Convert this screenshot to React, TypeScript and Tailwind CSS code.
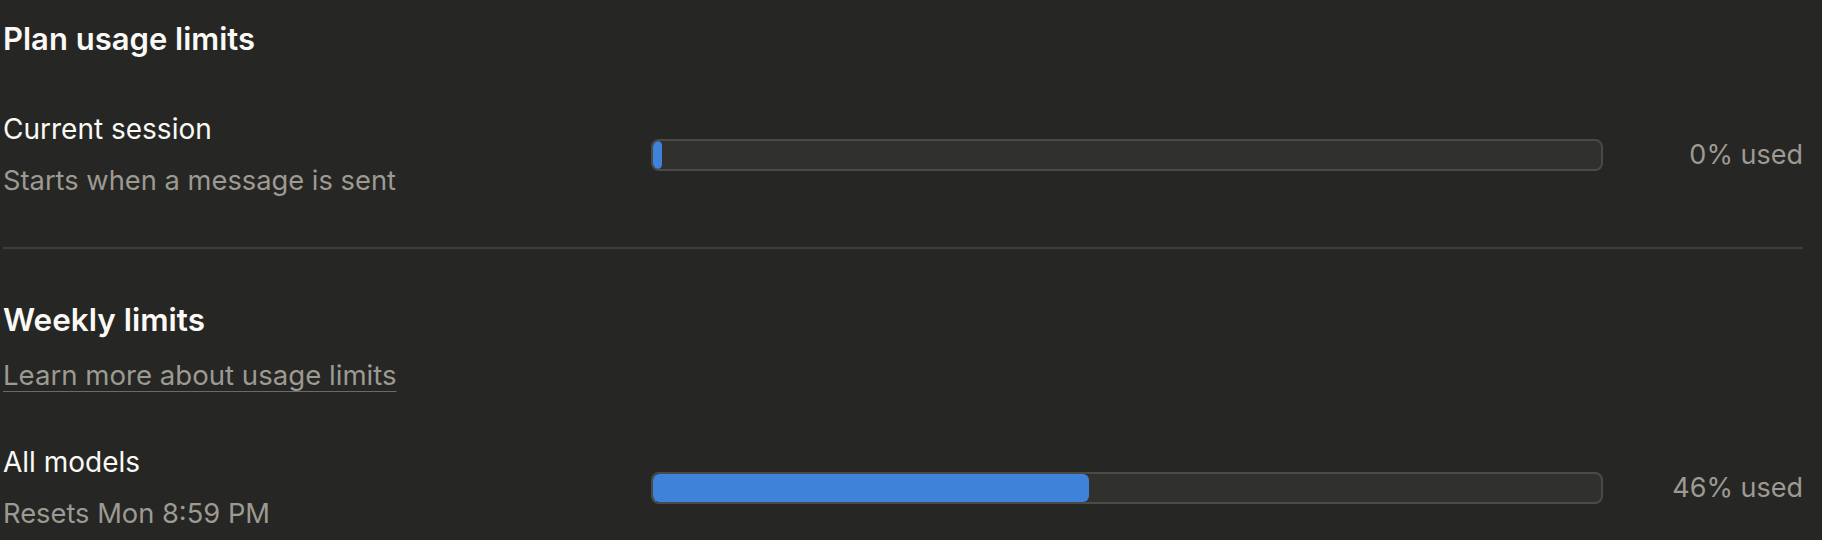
import React from "react";

type Limit = {
  label: string;
  detail: string;
  percent: number;
};

const session: Limit = { label: "Current session", detail: "Starts when a message is sent", percent: 0 };
const weekly: Limit = { label: "All models", detail: "Resets Mon 8:59 PM", percent: 46 };

function UsageRow({ label, detail, percent }: Limit) {
  return (
    <div className="flex items-center">
      <div className="w-[648px] shrink-0">
        <div className="text-[28px] leading-[36px] text-[#faf9f5]">{label}</div>
        <div className="mt-[16px] text-[27.3px] leading-[36px] text-[#9c9a92]">{detail}</div>
      </div>
      <div className="flex-1 h-[32px] rounded-[8px] border-2 border-[#4a4a47] bg-[#30302e] overflow-hidden">
        <div
          className="h-full min-w-[9px] rounded-[6px] bg-[#3f82d9]"
          style={{ width: `${percent}%` }}
        />
      </div>
      <div className="w-[200px] shrink-0 text-right text-[27px] leading-[36px] text-[#9c9a92]">
        {percent}% used
      </div>
    </div>
  );
}

export default function App() {
  return (
    <div
      className="min-h-screen bg-[#262624] pl-[3px] pt-[21px]"
      style={{ fontFamily: "Inter, 'Noto Sans', sans-serif" }}
    >
      <div className="w-[1800px]">
        {/* Plan usage */}
        <h2 className="text-[31px] leading-[36px] font-semibold text-[#faf9f5]">Plan usage limits</h2>
        <div className="mt-[54px]">
          <UsageRow {...session} />
        </div>

        <div className="mt-[48px] border-t-2 border-[#3d3d3b]" />

        {/* Weekly */}
        <h2 className="mt-[53px] text-[31.5px] leading-[36px] font-semibold text-[#faf9f5]">Weekly limits</h2>
        <a
          href="#"
          className="mt-[19px] inline-block text-[27.6px] leading-[36px] text-[#9c9a92] underline decoration-1 underline-offset-[6px] decoration-[#6b6a66]"
        >
          Learn more about usage limits
        </a>
        <div className="mt-[51px]">
          <UsageRow {...weekly} />
        </div>
      </div>
    </div>
  );
}
